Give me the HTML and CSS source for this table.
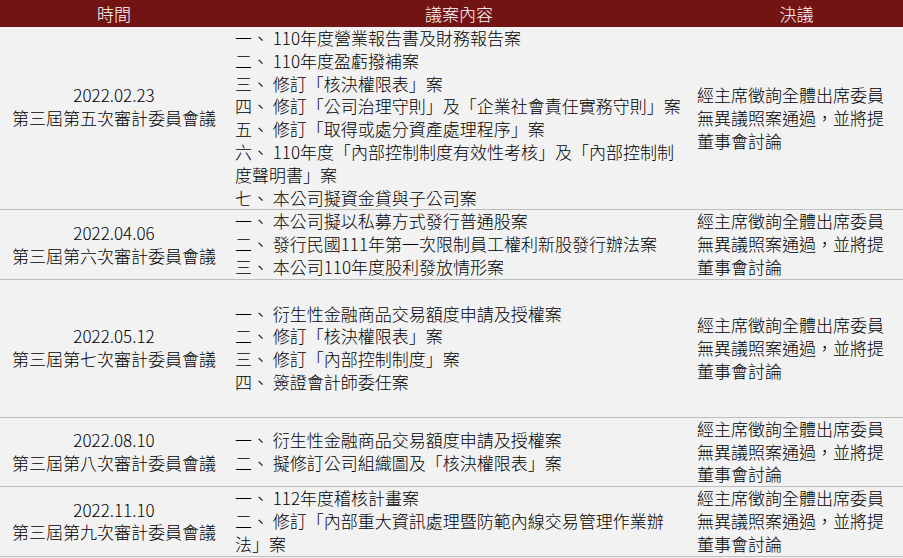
FILE: index.html
```html
<!DOCTYPE html>
<html lang="zh-Hant">
<head>
<meta charset="utf-8">
<title>審計委員會議</title>
<link rel="stylesheet" href="styles.css">
</head>
<body>
<table class="meetings">
  <thead>
    <tr>
      <th class="col-time">時間</th>
      <th class="col-agenda">議案內容</th>
      <th class="col-result">決議</th>
    </tr>
  </thead>
  <tbody>
    <tr class="row-a">
      <td class="time">2022.02.23<br>第三屆第五次審計委員會議<br>&nbsp;</td>
      <td class="agenda">一、 110年度營業報告書及財務報告案<br>二、 110年度盈虧撥補案<br>三、 修訂「核決權限表」案<br>四、 修訂「公司治理守則」及「企業社會責任實務守則」案<br>五、 修訂「取得或處分資產處理程序」案<br>六、 110年度「內部控制制度有效性考核」及「內部控制制度聲明書」案<br>七、 本公司擬資金貸與子公司案</td>
      <td class="result">經主席徵詢全體出席委員無異議照案通過，並將提董事會討論</td>
    </tr>
    <tr class="row-b">
      <td class="time">2022.04.06<br>第三屆第六次審計委員會議</td>
      <td class="agenda">一、 本公司擬以私募方式發行普通股案<br>二、 發行民國111年第一次限制員工權利新股發行辦法案<br>三、 本公司110年度股利發放情形案</td>
      <td class="result">經主席徵詢全體出席委員無異議照案通過，並將提董事會討論</td>
    </tr>
    <tr class="row-c">
      <td class="time">2022.05.12<br>第三屆第七次審計委員會議</td>
      <td class="agenda">一、 衍生性金融商品交易額度申請及授權案<br>二、 修訂「核決權限表」案<br>三、 修訂「內部控制制度」案<br>四、 簽證會計師委任案</td>
      <td class="result">經主席徵詢全體出席委員無異議照案通過，並將提董事會討論</td>
    </tr>
    <tr class="row-d">
      <td class="time">2022.08.10<br>第三屆第八次審計委員會議</td>
      <td class="agenda">一、 衍生性金融商品交易額度申請及授權案<br>二、 擬修訂公司組織圖及「核決權限表」案</td>
      <td class="result">經主席徵詢全體出席委員無異議照案通過，並將提董事會討論</td>
    </tr>
    <tr class="row-e">
      <td class="time">2022.11.10<br>第三屆第九次審計委員會議</td>
      <td class="agenda">一、 112年度稽核計畫案<br>二、 修訂「內部重大資訊處理暨防範內線交易管理作業辦法」案</td>
      <td class="result">經主席徵詢全體出席委員無異議照案通過，並將提董事會討論</td>
    </tr>
  </tbody>
</table>
</body>
</html>
```

FILE: styles.css
```css
html, body {
  margin: 0;
  padding: 0;
  background: #f2f2f2;
}

body {
  font-family: "Noto Sans CJK TC", "Noto Sans", sans-serif;
  font-size: 17px;
  font-weight: 300;
  color: #000;
}

.meetings {
  width: 903px;
  border-collapse: collapse;
  table-layout: fixed;
  background: #f2f2f2;
}

.meetings th {
  background: #731414;
  color: #fff;
  font-weight: 300;
  height: 27px;
  padding: 0;
  line-height: 27px;
  text-align: center;
}

.col-time { width: 228px; }
.col-agenda { width: 462px; }
.col-result { width: 213px; }

.meetings td {
  padding: 0 7px;
  line-height: 22.8px;
  vertical-align: middle;
  border-bottom: 1px solid #bdbdbd;
}

.meetings td.time {
  text-align: center;
  padding: 0;
}

.meetings td.agenda,
.meetings td.result {
  text-align: left;
}

.row-c td {
  height: 137px;
}
```
